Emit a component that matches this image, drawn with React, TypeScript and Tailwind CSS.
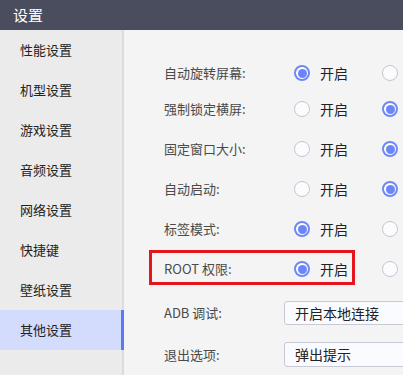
import React from 'react';

const menu = ['性能设置', '机型设置', '游戏设置', '音频设置', '网络设置', '快捷键', '壁纸设置', '其他设置'];

const radioRows = [
  { label: '自动旋转屏幕:', on: true },
  { label: '强制锁定横屏:', on: false },
  { label: '固定窗口大小:', on: false },
  { label: '自动启动:', on: false },
  { label: '标签模式:', on: true },
  { label: 'ROOT 权限:', on: true, marked: true },
];

function Radio({ checked }: { checked: boolean }) {
  if (checked) {
    return (
      <span className="flex h-4 w-4 shrink-0 items-center justify-center rounded-full border-2 border-[#6f88f8] bg-white">
        <span className="h-[9px] w-[9px] rounded-full bg-[#6a84f9]" />
      </span>
    );
  }
  return <span className="h-4 w-4 shrink-0 rounded-full border border-[#c4c6d4] bg-[#fcfcff]" />;
}

export default function App() {
  return (
    <div
      className="flex h-[375px] w-[403px] flex-col overflow-hidden bg-[#f4f4f4]"
      style={{ fontFamily: '"Noto Sans CJK SC", "Noto Sans", sans-serif' }}
    >
      <header className="flex h-[30px] shrink-0 items-center bg-[#4a4d5e] pl-[13px] text-[15px] text-white">
        设置
      </header>

      <div className="flex flex-1">
        <nav className="w-[124px] shrink-0 border-r-2 border-[#dcdcdc] bg-[#ebebeb]">
          {menu.map((item) => {
            const active = item === '其他设置';
            return (
              <div
                key={item}
                className={`relative flex h-10 items-center pl-5 text-[13px] text-[#222] ${active ? 'bg-[#d3dcfd]' : ''}`}
              >
                {item}
                {active && <span className="absolute -right-[2px] top-0 bottom-0 w-[3px] bg-[#5c78f6]" />}
              </div>
            );
          })}
        </nav>

        <main className="flex-1 pl-10 pt-[27px]">
          {radioRows.map((row, i) => (
            <div key={row.label} className={`relative flex items-center ${i === 0 ? 'h-8' : 'h-10'}`}>
              {row.marked && (
                <span className="absolute -left-[15px] top-px h-[35px] w-[206px] border-[3px] border-[#e8141c]" />
              )}
              <span className="w-[130px] shrink-0 text-[13px] text-[#4a4a4a]">{row.label}</span>
              <div className="flex w-[88px] shrink-0 items-center gap-[10px]">
                <Radio checked={row.on} />
                <span className="text-[14px] text-[#222]">开启</span>
              </div>
              <Radio checked={!row.on} />
            </div>
          ))}

          <div className="flex h-12 items-center">
            <span className="w-[120px] shrink-0 text-[13px] text-[#4a4a4a]">ADB 调试:</span>
            <div className="flex h-6 w-[180px] shrink-0 items-center rounded-[3px] border border-[#c8c9d4] bg-[#fafbff] pl-[10px] text-[14px] text-[#222]">
              开启本地连接
            </div>
          </div>
          <div className="flex h-[35px] items-center">
            <span className="w-[120px] shrink-0 text-[13px] text-[#4a4a4a]">退出选项:</span>
            <div className="flex h-[25px] w-[180px] shrink-0 items-center rounded-[3px] border border-[#c8c9d4] bg-[#fafbff] pl-[10px] text-[14px] text-[#222]">
              弹出提示
            </div>
          </div>
        </main>
      </div>
    </div>
  );
}
